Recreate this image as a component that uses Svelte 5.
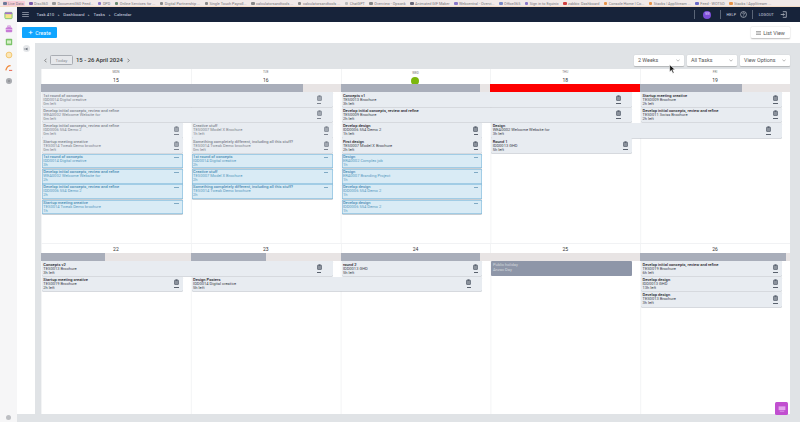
<script lang="ts">
  type Ev = { r: number; c: number; s?: number; t: string; j: string; l: string; k?: string }

  const bookmarks = [
    ['#6b7a99', 'Live Data'], ['#7a5ba8', 'Disc360'], ['#999', 'Document360 Feed...'], ['#8a78c8', 'DPD'],
    ['#6a8a70', 'Online Services for ...'], ['#888', 'Digital Partnership ...'], ['#888', 'Single Touch Payroll...'],
    ['#888', 'calculatorsandtools ...'], ['#888', 'calculatorsandtools ...'], ['#bbb', 'ChatGPT'],
    ['#888', 'Overview - Opsonk'], ['#667', 'Animated GIF Maker'], ['#8a78c8', 'Webcentral - Overvi...'],
    ['#7a8ac8', 'Office365'], ['#8a78c8', 'Sign in to Equinix'], ['#d04040', 'zabbix: Dashboard'],
    ['#e8944a', 'Console Home | Co...'], ['#e8944a', 'Stacks | AppStream ...'], ['#6a6ac8', 'Feed - WOTSO'],
    ['#e8944a', 'Stacks | AppStream ...']
  ]

  const DI = 'Develop initial concepts, review and refine'
  const SC = 'Something completely different, including all this stuff?'

  const week1: Ev[] = [
    { r: 1, c: 1, s: 2, t: '1st round of concepts', j: 'IDD0014 Digital creative', l: '0m left', k: 'past' },
    { r: 1, c: 3, s: 2, t: 'Concepts v1', j: 'TES0013 Brochure', l: '3h left' },
    { r: 1, c: 5, t: 'Startup meeting creative', j: 'TES0009 Brochure', l: '2h left' },
    { r: 2, c: 1, s: 2, t: DI, j: 'WEA0002 Welcome Website for', l: '0m left', k: 'past' },
    { r: 2, c: 3, s: 2, t: DI, j: 'TES0009 Brochure', l: '2h left' },
    { r: 2, c: 5, t: DI, j: 'TES0011 Swiss Brochure', l: '2h left' },
    { r: 3, c: 1, t: DI, j: 'IDD0006 554 Demo 2', l: '0m left', k: 'past' },
    { r: 3, c: 2, t: 'Creative stuff', j: 'TES0007 Model X Brochure', l: '1h left', k: 'past' },
    { r: 3, c: 3, t: 'Develop design', j: 'IDD0006 554 Demo 2', l: '1h left' },
    { r: 3, c: 4, s: 2, t: 'Design', j: 'WEA0002 Welcome Website for', l: '3h left' },
    { r: 4, c: 1, t: 'Startup meeting creative', j: 'TES0014 Tweak Demo brochure', l: '0m left', k: 'past' },
    { r: 4, c: 2, t: SC, j: 'TES0014 Tweak Demo brochure', l: '0m left', k: 'past' },
    { r: 4, c: 3, t: 'First design', j: 'TES0007 Model X Brochure', l: '2h left' },
    { r: 4, c: 4, t: 'Round 1', j: 'IDD0013 GHD', l: '5h left' },
    { r: 5, c: 1, t: '1st round of concepts', j: 'IDD0014 Digital creative', l: '3h', k: 'blue' },
    { r: 5, c: 2, t: '1st round of concepts', j: 'IDD0014 Digital creative', l: '2h', k: 'blue' },
    { r: 5, c: 3, t: 'Design', j: 'ERA0002 Complex job', l: '1h', k: 'blue' },
    { r: 6, c: 1, t: DI, j: 'WEA0002 Welcome Website for', l: '2h', k: 'blue' },
    { r: 6, c: 2, t: 'Creative stuff', j: 'TES0007 Model X Brochure', l: '2h', k: 'blue' },
    { r: 6, c: 3, t: 'Design', j: 'ERA0007 Branding Project', l: '1h', k: 'blue' },
    { r: 7, c: 1, t: DI, j: 'IDD0006 554 Demo 2', l: '2h', k: 'blue' },
    { r: 7, c: 2, t: SC, j: 'TES0014 Tweak Demo brochure', l: '2h', k: 'blue' },
    { r: 7, c: 3, t: 'Develop design', j: 'IDD0006 554 Demo 2', l: '1h', k: 'blue' },
    { r: 8, c: 1, t: 'Startup meeting creative', j: 'TES0014 Tweak Demo brochure', l: '1h', k: 'blue' },
    { r: 8, c: 3, t: 'Develop design', j: 'IDD0006 554 Demo 2', l: '1h', k: 'blue' }
  ]

  const week2: Ev[] = [
    { r: 1, c: 1, s: 2, t: 'Concepts v2', j: 'TES0013 Brochure', l: '3h left' },
    { r: 1, c: 3, t: 'round 2', j: 'IDD0013 GHD', l: '5h left' },
    { r: 1, c: 5, t: DI, j: 'TES0019 Brochure', l: '6h left' },
    { r: 2, c: 1, t: 'Startup meeting creative', j: 'TES0019 Brochure', l: '2h left' },
    { r: 2, c: 2, s: 2, t: 'Design Posters', j: 'IDD0014 Digital creative', l: '5h left' },
    { r: 2, c: 5, t: 'Develop design', j: 'IDD0013 GHD', l: '13h left' },
    { r: 3, c: 5, t: 'Develop design', j: 'TES0013 Brochure', l: '3h left' }
  ]

  const weeks = [
    {
      days: [['MON', '15'], ['TUE', '16'], ['WED', ''], ['THU', '18'], ['FRI', '19']],
      load: [[100, ''], [75, ''], [93, ''], [100, 'over'], [68, '']],
      events: week1
    },
    {
      days: [['', '22'], ['', '23'], ['', '24'], ['', '25'], ['', '26']],
      load: [[43, ''], [50, ''], [93, ''], [0, ''], [97, '']],
      events: week2
    }
  ]
</script>

<div class="page">
  <div class="bookmarks">
    {#each bookmarks as [color, name], i}
      <span class="mark" class:active={i === 0}><i style={`background:${color}`}></i>{name}</span>
    {/each}
  </div>

  <div class="shell">
    <aside class="apps">
      <svg viewBox="0 0 10 10" width="9" height="9"><rect x="1" y="1.5" width="8" height="7" rx="1" fill="#f4e58a" stroke="#7bc86c" stroke-width="1"/><rect x="1" y="1.5" width="8" height="2" fill="#a070d0"/></svg>
      <svg viewBox="0 0 10 10" width="8" height="8"><rect x="1" y="3" width="8" height="6" rx="1" fill="#c77bd6"/><rect x="3.5" y="1.2" width="3" height="2" fill="none" stroke="#c77bd6"/><rect x="1" y="5" width="8" height=".7" fill="#f4d8f8"/></svg>
      <svg viewBox="0 0 10 10" width="8" height="8"><rect x="1" y="1" width="8" height="8" rx="1" fill="#7cc46a"/><rect x="2.5" y="3" width="5" height="4" fill="#d7efc8"/></svg>
      <svg viewBox="0 0 10 10" width="8" height="8"><circle cx="5" cy="5" r="3.6" fill="#fbe6b8" stroke="#f2c46c" stroke-width="1.2"/></svg>
      <svg viewBox="0 0 10 10" width="8" height="8"><path d="M1 8C2 4 4 2 7 2" fill="none" stroke="#f08a3c" stroke-width="1.6"/><path d="M5 8h4" stroke="#e8604c" stroke-width="1.2"/></svg>
      <svg viewBox="0 0 10 10" width="8" height="8"><circle cx="5" cy="5" r="3.8" fill="#a9abb0"/><circle cx="5" cy="5" r="1.4" fill="#8e9095"/></svg>
      <span class="apps-end"></span>
    </aside>

    <div class="main">
      <nav class="nav">
        <svg class="burger" viewBox="0 0 8 6" width="7" height="5"><path d="M0 .5h8M0 3h8M0 5.5h8" stroke="#aab1bd" stroke-width=".9"/></svg>
        <span>Task 410</span><b>▸</b><span>Dashboard</span><b>▸</b><span>Tasks</span><b>▸</b><span>Calendar</span>
        <div class="nav-right">
          <em></em>
          <span class="avatar">NW</span>
          <em></em>
          <span class="caps help">HELP</span>
          <svg viewBox="0 0 10 10" width="7" height="7"><circle cx="5" cy="5" r="4.2" fill="none" stroke="#dfe3e8" stroke-width=".8"/><path d="M3.8 3.9a1.3 1.3 0 1 1 1.9 1.2c-.5.3-.7.5-.7 1" fill="none" stroke="#dfe3e8" stroke-width=".8"/><circle cx="5" cy="7.3" r=".5" fill="#dfe3e8"/></svg>
          <em></em>
          <span class="caps">LOGOUT</span>
          <svg viewBox="0 0 10 10" width="7" height="7"><path d="M4 1h5v8H4M1 5h5M4.5 3.3 6.2 5 4.5 6.7" fill="none" stroke="#dfe3e8" stroke-width=".9"/></svg>
        </div>
      </nav>

      <div class="toolbar">
        <button class="create"><span>+</span>Create</button>
        <button class="list">
          <svg viewBox="0 0 8 6" width="5" height="4"><path d="M0 .5h8M0 3h8M0 5.5h8" stroke="#555" stroke-width=".8"/></svg>
          List View
        </button>
      </div>

      <div class="body">
        <div class="rail">
          <span class="back">
            <svg viewBox="0 0 8 8" width="4" height="4"><path d="M0 4h6M4 2l2 2-2 2M7.5 1.5v5" fill="none" stroke="#3c4452" stroke-width="1"/></svg>
          </span>
        </div>

        <div class="content">
          <div class="controls">
            <svg class="arrow" viewBox="0 0 4 6" width="3" height="5"><path d="M3.3.6 1 3l2.3 2.4" fill="none" stroke="#444" stroke-width=".8"/></svg>
            <button class="today">Today</button>
            <span class="range">15 - 26 April 2024</span>
            <svg class="arrow" viewBox="0 0 4 6" width="3" height="5"><path d="M.7.6 3 3 .7 5.4" fill="none" stroke="#444" stroke-width=".8"/></svg>
            <div class="selects">
              {#each ['2 Weeks', 'All Tasks', 'View Options'] as opt}
                <div class="select">
                  {opt}
                  <svg viewBox="0 0 6 4" width="4" height="3"><path d="M.6.8 3 3 5.4.8" fill="none" stroke="#666" stroke-width=".7"/></svg>
                </div>
              {/each}
            </div>
          </div>

          <div class="calendar">
            {#each weeks as week, w}
              <section class="week" class:second={w === 1}>
                <div class="heads">
                  {#each week.days as [name, num], d}
                    <div class="head">
                      {#if name}<small>{name}</small>{/if}
                      {#if w === 0 && d === 2}
                        <span class="now"></span>
                      {:else}
                        <strong>{num}</strong>
                      {/if}
                    </div>
                  {/each}
                </div>
                <div class="loads">
                  {#each week.load as [pct, kind]}
                    <div class="load"><span class:over={kind === 'over'} style={`width:${pct}%`}></span></div>
                  {/each}
                </div>
                <div class="events">
                  {#each week.events as ev}
                    <article class={`event ${ev.k ?? ''}`} class:wide={ev.s} style={`grid-area:${ev.r} / ${ev.c} / span 1 / span ${ev.s ?? 1}`}>
                      <div class="text">
                        <b>{ev.t}</b>
                        <span>{ev.j}</span>
                        <span>{ev.l}</span>
                      </div>
                      <div class="tools">
                        {#if ev.k !== 'blue'}
                          <svg viewBox="0 0 8 9" width="5" height="6"><rect x=".8" y="1.5" width="6.4" height="7" rx=".7" fill="#8b929c" stroke="#4c5563" stroke-width="1"/><rect x="2.5" y=".4" width="3" height="2" fill="#4c5563"/></svg>
                        {/if}
                        <i></i>
                      </div>
                    </article>
                  {/each}
                  {#if w === 1}
                    <article class="holiday"><span>Public holiday</span><b>Anzac Day</b></article>
                  {/if}
                </div>
              </section>
            {/each}
          </div>
        </div>
      </div>
      <div class="foot"></div>
    </div>
  </div>

  <button class="chat" aria-label="Chat">
    <svg viewBox="0 0 10 8" width="8" height="6"><rect x=".5" y=".5" width="9" height="5" fill="#e3a8ec"/><path d="M2 7h6" stroke="#e3a8ec"/></svg>
  </button>
  <svg class="cursor" viewBox="0 0 10 14" width="7" height="10"><path d="M1 1v10l2.5-2.3L5.5 13l1.7-.8-2-4.2h3.4z" fill="#111" stroke="#fff" stroke-width=".8"/></svg>
</div>

<style>
  :global(body) {
    margin: 0;
    background: #f6f6f7;
  }

  .page {
    position: relative;
    width: 800px;
    height: 422px;
    overflow: hidden;
    display: flex;
    flex-direction: column;
    font-family: Roboto, "Liberation Sans", sans-serif;
    font-size: 4.05px;
    color: #333;
  }

  button {
    font-family: inherit;
    border: 0;
    padding: 0;
  }

  .bookmarks {
    height: 7px;
    flex: none;
    display: flex;
    align-items: center;
    gap: 4.5px;
    padding-left: 3px;
    background: #f1e9e8;
    color: #77777d;
    font-size: 3.8px;
    white-space: nowrap;
    overflow: hidden;
    box-shadow: inset 0 -1px 0 #f6dcc6;
  }

  .mark {
    display: flex;
    align-items: center;
    gap: 1.5px;
  }

  .mark i {
    width: 3.5px;
    height: 3.5px;
    border-radius: 1px;
  }

  .mark.active {
    background: #f6cdd6;
    border-radius: 1px;
    padding-right: 1px;
  }

  .shell {
    flex: 1;
    display: flex;
    min-height: 0;
  }

  .apps {
    width: 17px;
    flex: none;
    display: flex;
    flex-direction: column;
    align-items: center;
    gap: 5px;
    padding-top: 4px;
    background: #f6f6f7;
  }

  .apps-end {
    margin-top: auto;
    margin-bottom: 2px;
    width: 5px;
    height: 5px;
    border-radius: 50%;
    background: #bdbfc3;
  }

  .main {
    flex: 1;
    display: flex;
    flex-direction: column;
    min-width: 0;
    background: #e0e3e6;
  }

  .nav {
    height: 15px;
    flex: none;
    display: flex;
    align-items: center;
    gap: 3.5px;
    padding: 0 13.5px 0 5px;
    background: #17233a;
    color: #d5d9e0;
    font-size: 4.4px;
  }

  .nav b {
    font-size: 3px;
    font-weight: 400;
    color: #aab1bd;
  }

  .burger {
    margin-right: 4px;
  }

  .nav-right {
    margin-left: auto;
    display: flex;
    align-items: center;
    gap: 5.5px;
  }

  .nav-right em {
    width: 1px;
    height: 9px;
    background: #5a6577;
  }

  .caps {
    font-size: 3.7px;
    letter-spacing: .2px;
  }

  .help {
    margin-right: -2px;
  }

  .avatar {
    width: 8px;
    height: 8px;
    margin: 0 3px;
    border-radius: 50%;
    background: #7c4dd8;
    font-size: 2.6px;
    color: #e6dcf8;
    display: flex;
    align-items: center;
    justify-content: center;
  }

  .toolbar {
    height: 21px;
    flex: none;
    display: flex;
    align-items: center;
    justify-content: space-between;
    padding: 0 10px 0 5px;
    background: #fff;
  }

  .create {
    width: 35px;
    height: 11px;
    display: flex;
    align-items: center;
    justify-content: center;
    gap: 2.5px;
    background: #0fa5ff;
    color: #fff;
    font-size: 5.3px;
    border-radius: 1px;
  }

  .create span {
    font-size: 8px;
    line-height: 8px;
  }

  .list {
    width: 39px;
    height: 11px;
    display: flex;
    align-items: center;
    justify-content: center;
    gap: 2px;
    background: #fff;
    color: #555;
    font-size: 5.4px;
    border-radius: 1px;
    box-shadow: 0 .5px 1.5px #0004;
  }

  .body {
    height: 371px;
    flex: none;
    display: flex;
  }

  .rail {
    width: 17.5px;
    flex: none;
    background: #fff;
    padding-top: 2px;
  }

  .back {
    display: flex;
    align-items: center;
    justify-content: center;
    width: 7px;
    height: 7px;
    margin-left: 5.5px;
    border-radius: 50%;
    background: #e4e6e9;
  }

  .content {
    flex: 1;
    min-width: 0;
    padding: 0 10px 0 6.5px;
    display: flex;
    flex-direction: column;
  }

  .controls {
    height: 26px;
    flex: none;
    display: flex;
    align-items: center;
    padding: 8px 0 0 3px;
    box-sizing: border-box;
    color: #333;
  }

  .arrow {
    flex: none;
  }

  .today {
    width: 23px;
    height: 10px;
    margin: 0 3px 0 3px;
    background: #e6e8eb;
    border: .8px solid #a9adb3;
    border-radius: 1.5px;
    color: #8b8f96;
    font-size: 4.4px;
  }

  .range {
    font-size: 5.9px;
    font-weight: 500;
    margin-right: 4px;
  }

  .selects {
    margin-left: auto;
    display: flex;
    gap: 3px;
  }

  .select {
    width: 50px;
    height: 11px;
    box-sizing: border-box;
    padding: 0 4px;
    display: flex;
    align-items: center;
    justify-content: space-between;
    background: #fff;
    color: #555;
    font-size: 5.4px;
    border-radius: 1px;
    box-shadow: 0 .5px 1px #0003;
  }

  .calendar {
    flex: 1;
    background: #fff;
    display: flex;
    flex-direction: column;
  }

  .week {
    height: 174px;
    box-sizing: border-box;
  }

  .week.second {
    flex: 1;
    border-top: 1px solid #f1f2f4;
  }

  .heads,
  .loads,
  .events {
    display: grid;
    grid-template-columns: repeat(5, 1fr);
  }

  .heads {
    height: 15px;
  }

  .second .heads {
    height: 9px;
    padding-top: 0;
  }

  .head {
    display: flex;
    flex-direction: column;
    align-items: center;
    justify-content: flex-end;
    box-shadow: inset 1px 0 0 #f3f4f5;
    color: #444;
  }

  .head small {
    font-size: 3.1px;
    color: #777;
    margin-bottom: 1.7px;
  }

  .head strong {
    font-size: 5px;
    font-weight: 400;
    line-height: 8px;
    color: #333;
  }

  .now {
    width: 8px;
    height: 8px;
    margin-bottom: -1px;
    border-radius: 50%;
    background: #7cb70c;
  }

  .loads {
    height: 8px;
    background: #e8e4e4;
  }

  .load {
    display: flex;
  }

  .load span {
    background: #a9aeba;
  }

  .load span.over {
    background: #fe0000;
  }

  .events {
    grid-auto-rows: 14.6px;
    row-gap: .72px;
    padding-top: .4px;
    height: 151px;
    align-content: start;
    background-image: linear-gradient(to right, #f3f4f5 1px, transparent 1px);
    background-size: 20% 100%;
  }

  .second .events {
    height: 153px;
  }

  .event,
  .holiday {
    margin: 0 8px 0 1px;
    min-width: 0;
    display: flex;
    justify-content: space-between;
    background: #e8ecf1;
    border-radius: 1px;
    box-shadow: 0 .6px .6px #aeb4bd;
  }

  .event {
    padding: 1.2px 4px 0 1.3px;
    box-sizing: border-box;
  }

  .event.wide {
    padding-right: 11px;
  }

  .text {
    display: flex;
    flex-direction: column;
    line-height: 4px;
    white-space: nowrap;
    color: #3e444e;
  }

  .text b {
    font-weight: 500;
    color: #1f232a;
  }

  .past .text,
  .past .text b {
    color: #7f858e;
  }

  .past .tools {
    opacity: .75;
  }

  .blue {
    background: #d9ebf5;
    box-shadow: 0 0 0 .5px #6aaed6 inset, 0 .6px .6px #8e9ba8;
  }

  .blue .text {
    color: #5b9cc2;
  }

  .blue .text b {
    color: #4a8bb3;
  }

  .tools {
    display: flex;
    flex-direction: column;
    align-items: center;
    gap: 2px;
    padding-top: 1.5px;
    width: 5px;
  }

  .blue .tools {
    padding-top: 2px;
  }

  .tools i {
    width: 4.5px;
    height: .8px;
    background: #59616d;
  }

  .blue .tools i {
    background: #7fa9c4;
  }

  .holiday {
    grid-area: 1 / 4;
    flex-direction: column;
    justify-content: flex-start;
    gap: 0;
    line-height: 5px;
    padding: 1px 1.5px;
    box-sizing: border-box;
    background: #8e96a8;
    color: #d3d6dd;
    box-shadow: none;
  }

  .holiday b {
    font-weight: 400;
  }

  .foot {
    flex: 1;
  }

  .chat {
    position: absolute;
    left: 775px;
    top: 402px;
    width: 13px;
    height: 13px;
    display: flex;
    align-items: center;
    justify-content: center;
    background: #c14fd0;
    border-radius: 1.5px;
  }

  .cursor {
    position: absolute;
    left: 669px;
    top: 64px;
  }
</style>
